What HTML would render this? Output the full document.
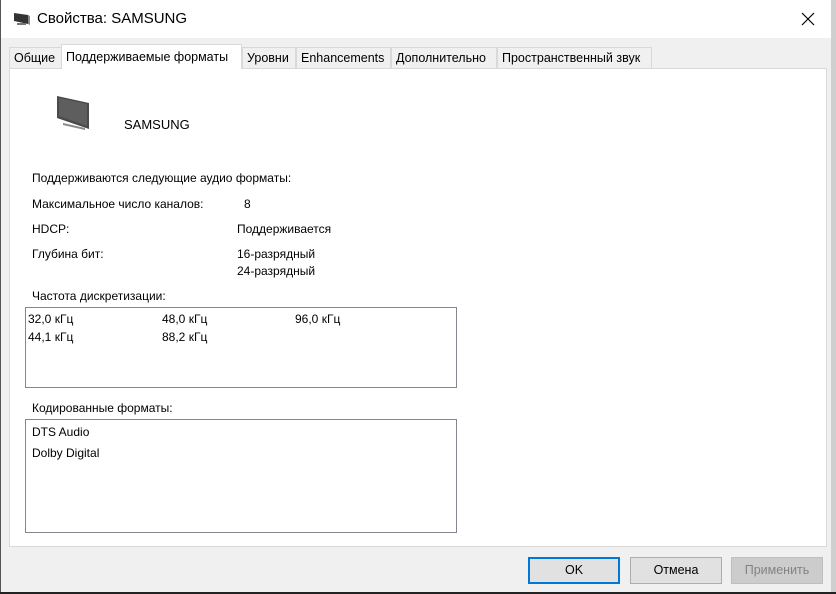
<!DOCTYPE html>
<html><head><meta charset="utf-8"><style>
*{margin:0;padding:0;box-sizing:border-box}
body{width:836px;height:594px;background:#cfcfcf;position:relative;overflow:hidden;font-family:"Liberation Sans","DejaVu Sans",sans-serif;font-size:12px;color:#000}
.win{position:absolute;left:0;top:0;width:831px;height:592px;background:#f0f0f0;border-left:1px solid #555}
.title{position:absolute;left:0;top:0;width:830px;height:38px;background:#fff}
.abs{position:absolute;white-space:nowrap}
.tab{position:absolute;top:47px;height:22px;border:1px solid #d9d9d9;border-bottom:none;background:#f0f0f0;padding:3px 0 0 4px;font-size:12.5px}
.panel{position:absolute;left:8px;top:68px;width:818px;height:479px;background:#fff;border:1px solid #d9d9d9}
.box{position:absolute;border:1px solid #828790;background:#fff}
.btn{position:absolute;top:557px;height:27px;width:92px;border:1px solid #adadad;background:#e1e1e1;text-align:center;line-height:25px;font-size:12.5px}
</style></head><body>
<div class="win">
<div class="title">
<svg class="abs" style="left:12px;top:11px" width="18" height="16" viewBox="0 0 18 16"><polygon points="1,2 15,4 15,13 1,10" fill="#333"/><polygon points="15,4 17,5 17,14 15,13" fill="#888"/><rect x="4" y="12" width="9" height="2" fill="#777"/></svg>
<div class="abs" style="left:36px;top:10px;font-size:15px">Свойства: SAMSUNG</div>
<svg class="abs" style="left:800px;top:12px" width="14" height="14"><path d="M1 1L13 13M13 1L1 13" stroke="#000" stroke-width="1.2"/></svg>
</div>
<div class="tab" style="left:8px;width:53px">Общие</div>
<div class="tab" style="left:241px;width:54px">Уровни</div>
<div class="tab" style="left:295px;width:95px">Enhancements</div>
<div class="tab" style="left:390px;width:106px">Дополнительно</div>
<div class="tab" style="left:496px;width:155px">Пространственный звук</div>
<div class="panel"></div>
<div class="tab" style="left:60px;width:181px;top:44px;height:25px;background:#fff;padding-top:5px;z-index:2">Поддерживаемые форматы</div>
<svg class="abs" style="left:54px;top:95px" width="38" height="36" viewBox="0 0 38 36"><polygon points="2,1 34,8 34,34 2,23" fill="#4a4a4a"/><polygon points="4,3 32,9 32,31 4,21" fill="#5e5e5e"/><polygon points="8,28 30,33 30,35 8,30" fill="#888"/></svg>
<div class="abs" style="left:123px;top:117px;font-size:13px">SAMSUNG</div>
<div class="abs" style="left:31px;top:171px">Поддерживаются следующие аудио форматы:</div>
<div class="abs" style="left:31px;top:197px">Максимальное число каналов:</div>
<div class="abs" style="left:243px;top:197px">8</div>
<div class="abs" style="left:31px;top:222px">HDCP:</div>
<div class="abs" style="left:236px;top:222px">Поддерживается</div>
<div class="abs" style="left:31px;top:247px">Глубина бит:</div>
<div class="abs" style="left:236px;top:247px">16-разрядный</div>
<div class="abs" style="left:236px;top:264px">24-разрядный</div>
<div class="abs" style="left:31px;top:289px">Частота дискретизации:</div>
<div class="box" style="left:24px;top:307px;width:432px;height:81px"></div>
<div class="abs" style="left:27px;top:312px">32,0 кГц</div>
<div class="abs" style="left:161px;top:312px">48,0 кГц</div>
<div class="abs" style="left:294px;top:312px">96,0 кГц</div>
<div class="abs" style="left:27px;top:330px">44,1 кГц</div>
<div class="abs" style="left:161px;top:330px">88,2 кГц</div>
<div class="abs" style="left:31px;top:401px">Кодированные форматы:</div>
<div class="box" style="left:24px;top:419px;width:432px;height:114px"></div>
<div class="abs" style="left:31px;top:425px">DTS Audio</div>
<div class="abs" style="left:31px;top:446px">Dolby Digital</div>
<div class="btn" style="left:527px;border:2px solid #0078d7;line-height:23px">OK</div>
<div class="btn" style="left:629px">Отмена</div>
<div class="btn" style="left:730px;color:#838383;background:#cccccc;border-color:#bfbfbf">Применить</div>
</div>
<div class="abs" style="left:0;top:592px;width:836px;height:2px;background:#222"></div>
</body></html>
